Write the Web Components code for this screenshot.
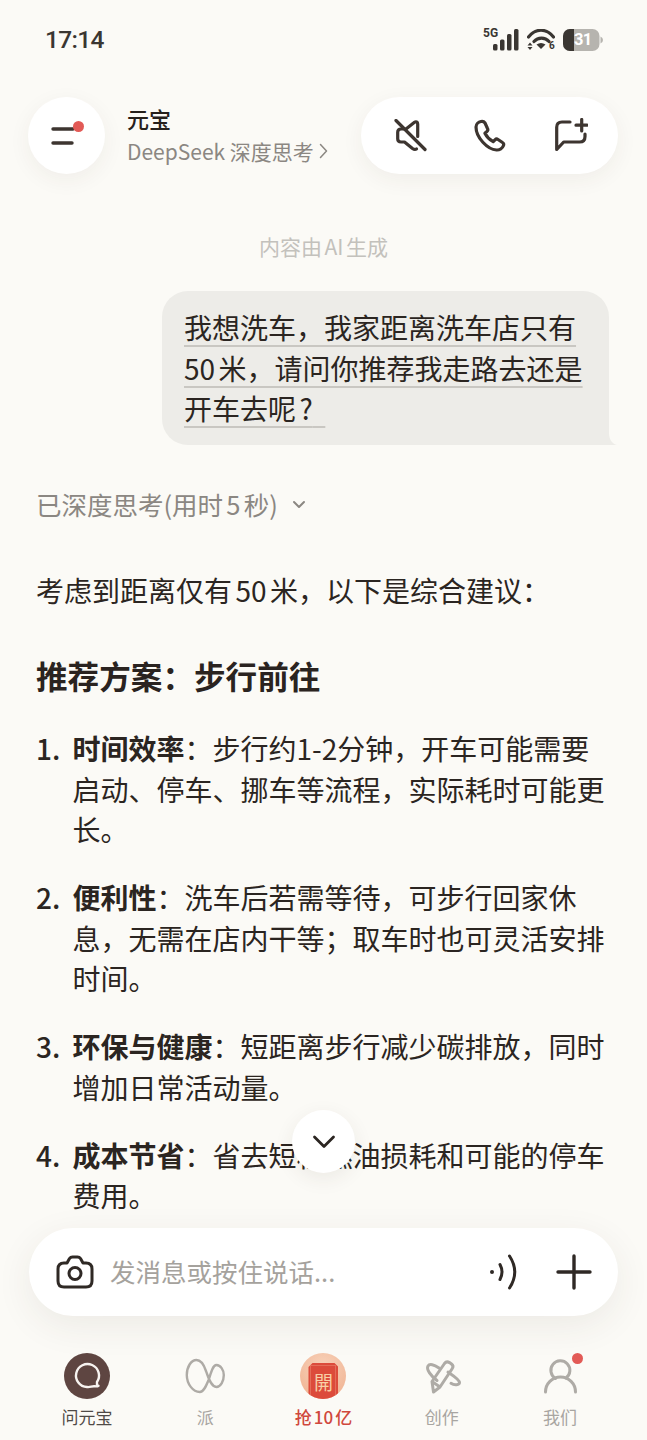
<!DOCTYPE html>
<html lang="zh">
<head>
<meta charset="utf-8">
<title>元宝</title>
<style>
  html, body { margin: 0; padding: 0; }
  body {
    background: #fbfaf6;
    color: #2b2521;
    font-family: "Noto Sans CJK SC", "Noto Sans", sans-serif;
    text-autospace: normal;
  }
</style>
</head>
<body>
<yb-app>
  <yb-status slot="top" time="17:14"></yb-status>
  <yb-header slot="top" name="元宝" sub="DeepSeek 深度思考"></yb-header>

  <yb-notice>内容由AI生成</yb-notice>
  <yb-bubble>我想洗车，我家距离洗车店只有50米，请问你推荐我走路去还是开车去呢?</yb-bubble>
  <yb-thought>已深度思考(用时5秒)</yb-thought>
  <yb-answer>
    <p>考虑到距离仅有50米，以下是综合建议：</p>
    <h3>推荐方案：步行前往</h3>
    <yb-step n="1."><b>时间效率</b>：步行约1-2分钟，开车可能需要启动、停车、挪车等流程，实际耗时可能更长。</yb-step>
    <yb-step n="2."><b>便利性</b>：洗车后若需等待，可步行回家休息，无需在店内干等；取车时也可灵活安排时间。</yb-step>
    <yb-step n="3."><b>环保与健康</b>：短距离步行减少碳排放，同时增加日常活动量。</yb-step>
    <yb-step n="4."><b>成本节省</b>：省去短程燃油损耗和可能的停车费用。</yb-step>
  </yb-answer>
  <yb-scroll-down slot="over"></yb-scroll-down>

  <yb-composer slot="bottom" placeholder="发消息或按住说话..."></yb-composer>
  <yb-tabbar slot="bottom">
    <yb-tab label="问元宝" tone="active">
      <svg width="46" height="46" viewBox="0 0 46 46">
        <circle cx="23" cy="23" r="23" fill="#5e4541"/>
        <path d="M33 32V29A11.500 11.500 0 1 0 23 34c3 .5 5-1 7.500-.7 1.400.2 3 .3 4-.5" fill="none" stroke="#f7f3f0" stroke-width="2.400" stroke-linecap="round"/>
      </svg>
    </yb-tab>
    <yb-tab label="派">
      <svg width="46" height="46" viewBox="0 0 46 46">
        <path d="M14.500 7C9 7 4.800 14 4.800 22 4.800 31 11 39 17.800 39 22 39 24.500 32 27 26 29 19 31 12 34.500 12 38.500 12 41.800 17 41.800 22 41.800 28.500 38.500 34 34.500 34 29 34 26 24 24 18 22 12 18.500 7 14.500 7Z" fill="none" stroke="#aeaba6" stroke-width="2.400"/>
      </svg>
    </yb-tab>
    <yb-tab label="抢10亿" tone="red">
      <yb-redpack></yb-redpack>
    </yb-tab>
    <yb-tab label="创作">
      <svg width="46" height="46" viewBox="0 0 46 46">
        <path d="M14.500 39L13 28.500 25.500 10.500q2-2.700 5-.9l2 1.400q2.500 2 .8 4.500L21 34Z M13 28.500l8 5.500" fill="none" stroke="#aeaba6" stroke-width="3" stroke-linejoin="round"/>
        <path d="M20 15C15 11.500 10.500 10.500 9 13 7 16.500 12 23 18 27.500M29 19c5 3.500 11.500 7.500 11.500 10.500 0 2.500-5 3.200-8.500 .8" fill="none" stroke="#aeaba6" stroke-width="3" stroke-linecap="round"/>
      </svg>
    </yb-tab>
    <yb-tab label="我们" dot>
      <svg width="46" height="46" viewBox="0 0 46 46">
        <path d="M8.500 39A15 15 0 0 1 38.500 39" fill="none" stroke="#aeaba6" stroke-width="3" stroke-linecap="round"/>
        <path d="M18.500 25.500A9.500 9.500 0 1 1 29 25" fill="none" stroke="#aeaba6" stroke-width="3" stroke-linecap="round"/>
      </svg>
    </yb-tab>
  </yb-tabbar>
</yb-app>

<script>
class YbApp extends HTMLElement {
  connectedCallback() {
    const shadowRoot = this.attachShadow({ mode: "open" });
    shadowRoot.innerHTML = `
      <style>
        :host { display: flex; flex-direction: column; height: 1440px; overflow: hidden; }
        .chat { flex: 1; min-height: 0; position: relative; overflow: hidden; }
        .scroll { height: 100%; overflow: hidden; }
      </style>
      <slot name="top"></slot>
      <div class="chat">
        <div class="scroll"><slot></slot></div>
        <slot name="over"></slot>
      </div>
      <slot name="bottom"></slot>
    `;
  }
}

class YbStatus extends HTMLElement {
  connectedCallback() {
    const shadowRoot = this.attachShadow({ mode: "open" });
    shadowRoot.innerHTML = `
      <style>
        :host { display: flex; height: 80px; padding: 0 44px 0 45px; align-items: center; justify-content: space-between; box-sizing: border-box; }
        .time { font: 500 24.500px/1 Roboto, sans-serif; color: #3a3632; letter-spacing: -.7px; }
        .icons { display: flex; align-items: center; }
        .five { font: 700 12px/1 Roboto, sans-serif; color: #3a3632; position: absolute; left: 0; top: -2px; }
        .signal { position: relative; width: 36px; height: 22px; margin-right: 8px; }
        .signal svg { position: absolute; left: 0; top: 0; }
        .wifi { position: relative; width: 28px; height: 22px; }
        .wifi svg { display: block; }
        .wifi span { position: absolute; left: 22px; bottom: 0; font: 700 10px/10px Roboto, sans-serif; color: #3a3632; }
        .batt { position: relative; width: 40px; height: 22px; margin-left: 8px; }
        .batt svg { position: absolute; left: 0; top: 0; }
        .batt span { position: absolute; left: 11px; top: 0; width: 17px; font: 700 16.500px/22px Roboto, sans-serif; color: #fff; text-align: center; letter-spacing: -.8px; }
      </style>
      <span class="time">${this.getAttribute("time")}</span>
      <div class="icons">
        <div class="signal">
          <span class="five">5G</span>
          <svg width="36" height="22" viewBox="0 0 36 22" fill="#3a3632">
            <rect x="10" y="15" width="4.500" height="6.500" rx="1.500"/>
            <rect x="17" y="10.500" width="4.500" height="11" rx="1.500"/>
            <rect x="24" y="5" width="4.500" height="16.500" rx="1.500"/>
            <rect x="31" y="0" width="4.500" height="21.500" rx="1.500"/>
          </svg>
        </div>
        <div class="wifi">
          <svg width="28" height="22" viewBox="0 0 28 22">
            <path d="M1.500 8C8.500 -1 19.500 -1 26.500 8M7 12.500C11 8 18 8 22 12.500" fill="none" stroke="#3a3632" stroke-width="3.200" stroke-linecap="round"/>
            <path d="M9.500 15.500Q14 12.500 18.500 15.500L14 20Z" fill="#3a3632"/>
            <path d="M.5 16.500L3 13.500 5.500 16.500ZM.5 18L3 21 5.500 18Z" fill="#3a3632"/>
          </svg>
          <span>6</span>
        </div>
        <div class="batt">
          <svg width="40" height="22" viewBox="0 0 40 22">
            <rect x="0" y="0" width="36.500" height="22" rx="7" fill="#b6b4af"/>
            <path d="M7 0H11V22H7a7 7 0 0 1-7-7V7a7 7 0 0 1 7-7Z" fill="#3a3632"/>
            <path d="M37.500 7.500q2.500 1 2.500 3.500t-2.500 3.500Z" fill="#b6b4af"/>
          </svg>
          <span>31</span>
        </div>
      </div>
    `;
  }
}

class YbHeader extends HTMLElement {
  connectedCallback() {
    const shadowRoot = this.attachShadow({ mode: "open" });
    shadowRoot.innerHTML = `
      <style>
        :host { display: flex; align-items: center; height: 77px; margin-top: 17px; padding: 0 29px 0 28px; }
        .menu, .actions { background: #fff; box-shadow: 0 6px 22px rgba(70, 55, 40, .06); }
        .menu { width: 77px; height: 77px; border-radius: 50%; flex: none; display: flex; align-items: center; justify-content: center; }
        .who { margin-left: 22px; flex: 1; }
        .name { font-size: 22px; line-height: 30px; font-weight: 500; color: #26201c; margin-top: -2px; }
        .sub { font-size: 21px; line-height: 30px; margin-top: 2.500px; color: #8b8782; display: flex; align-items: center; gap: 5px; white-space: nowrap; }
        .actions { width: 257px; height: 77px; border-radius: 39px; box-sizing: border-box; padding: 0 30px 0 32px; display: flex; align-items: center; justify-content: space-between; }
        svg { display: block; }
      </style>
      <div class="menu">
        <svg width="40" height="32" viewBox="0 0 40 32">
          <path d="M6 9H26" stroke="#3d3530" stroke-width="3.400" stroke-linecap="round"/>
          <path d="M6 23H25" stroke="#3d3530" stroke-width="3.400" stroke-linecap="round"/>
          <circle cx="31.500" cy="6.500" r="5.500" fill="#e25a56"/>
        </svg>
      </div>
      <div class="who">
        <div class="name">${this.getAttribute("name")}</div>
        <div class="sub">${this.getAttribute("sub")}
          <svg width="9" height="16" viewBox="0 0 9 16"><path d="M1.500 1.500L7.500 8 1.500 14.500" fill="none" stroke="#8b8782" stroke-width="1.500" stroke-linecap="round" stroke-linejoin="round"/></svg>
        </div>
      </div>
      <div class="actions">
        <svg width="34" height="34" viewBox="0 0 34 34" fill="none" stroke="#3d3530" stroke-width="3.200" stroke-linecap="round" stroke-linejoin="round">
          <path d="M24.700 17.500V5c0-2-1.700-2.800-3.200-1.700L13 10H8c-2 0-3.300 1.300-3.300 3.300v6.500c0 1.900 1.300 3.200 3.300 3.200h3.500l8 6.500c1.500 1.100 2.800 1.300 4 .5"/>
          <path d="M3 1.500L32 30.500"/>
        </svg>
        <svg width="36" height="36" viewBox="0 0 36 36" fill="none" stroke="#3d3530" stroke-width="3.200" stroke-linecap="round" stroke-linejoin="round">
          <path d="M9 3.500c-2.500.5-5 2.500-5 5.500 0 10.500 11.500 22.500 20.500 23 3 .2 6-1.800 7-4.500.5-1.400 0-2.400-1-3l-4.500-3c-1.200-.8-2.200-.5-3 .3l-1.800 1.900c-3.300-1.800-6.500-5-8.300-8.500l2-1.700c.9-.8 1.200-1.900.6-3L13 5c-.8-1.200-2.500-1.800-4-1.500z"/>
        </svg>
        <svg width="36" height="36" viewBox="0 0 36 36" fill="none" stroke="#3d3530" stroke-width="3.200" stroke-linecap="round" stroke-linejoin="round">
          <path d="M18 4H10q-5.300 0-5.300 5.300V31.500l7-7.500H27.500q5.500 0 5.500-5.500V16"/>
          <path d="M29.700 1.500V13M24 7.200H35"/>
        </svg>
      </div>
    `;
  }
}

class YbNotice extends HTMLElement {
  connectedCallback() {
    const shadowRoot = this.attachShadow({ mode: "open" });
    shadowRoot.innerHTML = `
      <style>
        :host { display: block; margin-top: 58px; text-align: center; font-size: 21px; line-height: 28px; color: #c3c1bc; }
      </style>
      <slot></slot>
    `;
  }
}

class YbBubble extends HTMLElement {
  connectedCallback() {
    const shadowRoot = this.attachShadow({ mode: "open" });
    shadowRoot.innerHTML = `
      <style>
        :host { display: block; position: relative; box-sizing: border-box; width: 447px; margin: 31px 38px 0 auto; padding: 16px 18px 16.500px 22px; background: #edecE8; border-radius: 26px 26px 0 26px; font-size: 28px; line-height: 40.500px; color: #2b2521; }
        .t { text-decoration: underline 1.500px #c9c7c2; text-underline-offset: 6px; text-decoration-skip-ink: none; }
        .t::after { content: "\\00a0\\00a0"; }
        .tail { position: absolute; right: -8px; bottom: 0; display: block; }
      </style>
      <span class="t"><slot></slot></span>
      <svg class="tail" width="8" height="12" viewBox="0 0 8 12"><path d="M0 0C0 6 3 11 8 12H0Z" fill="#edecE8"/></svg>
    `;
  }
}

class YbThought extends HTMLElement {
  connectedCallback() {
    const shadowRoot = this.attachShadow({ mode: "open" });
    shadowRoot.innerHTML = `
      <style>
        :host { display: flex; align-items: center; gap: 14px; margin: 41px 36px 0; font-size: 25.500px; line-height: 36px; color: #8b8782; }
      </style>
      <slot></slot>
      <svg width="14" height="9" viewBox="0 0 14 9"><path d="M2 2L7 7 12 2" fill="none" stroke="#8b8782" stroke-width="2" stroke-linecap="round" stroke-linejoin="round"/></svg>
    `;
  }
}

class YbAnswer extends HTMLElement {
  connectedCallback() {
    const shadowRoot = this.attachShadow({ mode: "open" });
    shadowRoot.innerHTML = `
      <style>
        :host { display: block; margin: 47.750px 37px 0 36px; font-size: 28px; line-height: 40.700px; color: #2b2521; }
        ::slotted(p) { margin: 0; }
        ::slotted(h3) { margin: 43px 0 30.500px; font-size: 31.600px; line-height: 44px; font-weight: 700; color: #2a2320; }
      </style>
      <slot></slot>
    `;
  }
}

class YbStep extends HTMLElement {
  connectedCallback() {
    const shadowRoot = this.attachShadow({ mode: "open" });
    shadowRoot.innerHTML = `
      <style>
        :host { display: grid; grid-template-columns: 36.500px 1fr; margin-bottom: 27px; text-autospace: no-autospace; }
        .n { font-weight: 500; }
        ::slotted(b) { font-weight: 700; }
      </style>
      <span class="n">${this.getAttribute("n")}</span>
      <div><slot></slot></div>
    `;
  }
}

class YbScrollDown extends HTMLElement {
  connectedCallback() {
    const shadowRoot = this.attachShadow({ mode: "open" });
    shadowRoot.innerHTML = `
      <style>
        :host { position: absolute; left: 292px; bottom: 55px; width: 63px; height: 63px; border-radius: 50%; background: #fff; box-shadow: 0 6px 20px rgba(70, 55, 40, .08); display: flex; align-items: center; justify-content: center; }
      </style>
      <svg width="24" height="14" viewBox="0 0 24 14"><path d="M2.500 2L12 11.500 21.500 2" fill="none" stroke="#2b2521" stroke-width="2.800" stroke-linecap="round" stroke-linejoin="round"/></svg>
    `;
  }
}

class YbComposer extends HTMLElement {
  connectedCallback() {
    const shadowRoot = this.attachShadow({ mode: "open" });
    shadowRoot.innerHTML = `
      <style>
        :host { display: flex; align-items: center; height: 88px; margin: 0 29px; padding: 0 26px 0 27px; box-sizing: border-box; background: #fff; border-radius: 44px; box-shadow: 0 10px 36px rgba(70, 55, 40, .08); }
        .ph { flex: 1; margin: 0 0 2px 16px; font-size: 25.500px; line-height: 34px; color: #a5a29d; text-autospace: no-autospace; }
        svg { display: block; flex: none; }
        .voice { margin-right: 37px; }
      </style>
      <svg width="38" height="36" viewBox="0 0 38 36" fill="none" stroke="#2f2925" stroke-width="3" stroke-linejoin="round">
        <path d="M2 15q0-6 6-6h3l2.500-4.500q1-1.500 3-1.500h5q2 0 3 1.500L27 9h3q6 0 6 6v12q0 6-6 6H8q-6 0-6-6Z"/>
        <circle cx="19" cy="19.500" r="6"/>
      </svg>
      <span class="ph">${this.getAttribute("placeholder")}</span>
      <svg class="voice" width="30" height="36" viewBox="0 0 30 36" fill="none" stroke="#2f2925" stroke-width="3" stroke-linecap="round">
        <circle cx="3" cy="18" r="2" fill="#2f2925" stroke="none"/>
        <path d="M11 10.500Q15 18 11 25.500"/>
        <path d="M20.500 2Q31 18 20.500 34"/>
      </svg>
      <svg width="36" height="36" viewBox="0 0 36 36" fill="none" stroke="#2f2925" stroke-width="3.400" stroke-linecap="round">
        <path d="M18 2V34M2 18H34"/>
      </svg>
    `;
  }
}

class YbTabbar extends HTMLElement {
  connectedCallback() {
    const shadowRoot = this.attachShadow({ mode: "open" });
    shadowRoot.innerHTML = `
      <style>
        :host { display: grid; grid-template-columns: repeat(5, 1fr); height: 124px; padding: 37px 28px 0; box-sizing: border-box; }
      </style>
      <slot></slot>
    `;
  }
}

class YbTab extends HTMLElement {
  connectedCallback() {
    const shadowRoot = this.attachShadow({ mode: "open" });
    const tone = this.getAttribute("tone");
    const color = tone === "active" ? "#4f4a46" : tone === "red" ? "#d0483c" : "#a8a5a1";
    shadowRoot.innerHTML = `
      <style>
        :host { display: flex; flex-direction: column; align-items: center; }
        .icon { position: relative; width: 46px; height: 46px; }
        .dot { position: absolute; left: 35px; top: 0; width: 11px; height: 11px; border-radius: 50%; background: #e25a56; }
        ::slotted(svg) { display: block; }
        .label { margin-top: 6px; font-size: 17px; line-height: 24px; color: ${color}; font-weight: ${tone === "red" ? 500 : 400}; }
      </style>
      <div class="icon"><slot></slot>${this.hasAttribute("dot") ? '<span class="dot"></span>' : ""}</div>
      <span class="label">${this.getAttribute("label")}</span>
    `;
  }
}

class YbRedpack extends HTMLElement {
  connectedCallback() {
    const shadowRoot = this.attachShadow({ mode: "open" });
    shadowRoot.innerHTML = `
      <style>
        :host { display: flex; justify-content: center; align-items: flex-start; width: 46px; height: 46px; border-radius: 50%; overflow: hidden; background: radial-gradient(circle at 50% 30%, #f8d3bb, #efae8c); }
        .env { position: relative; width: 30px; height: 44px; margin-top: 10px; background: #dc4b3b; clip-path: polygon(4px 0, 26px 0, 30px 4px, 30px 100%, 0 100%, 0 4px); display: flex; justify-content: center; padding-top: 7px; box-sizing: border-box; font: 400 19px/24px "Noto Sans CJK TC", sans-serif; color: #f8cfa6; }
        .env::before { content: ""; position: absolute; left: 2px; right: 2px; top: 2px; bottom: -4px; border: 1px solid rgba(250, 190, 160, .3); }
      </style>
      <div class="env">開</div>
    `;
  }
}

customElements.define("yb-app", YbApp);
customElements.define("yb-status", YbStatus);
customElements.define("yb-header", YbHeader);
customElements.define("yb-notice", YbNotice);
customElements.define("yb-bubble", YbBubble);
customElements.define("yb-thought", YbThought);
customElements.define("yb-answer", YbAnswer);
customElements.define("yb-step", YbStep);
customElements.define("yb-scroll-down", YbScrollDown);
customElements.define("yb-composer", YbComposer);
customElements.define("yb-tabbar", YbTabbar);
customElements.define("yb-tab", YbTab);
customElements.define("yb-redpack", YbRedpack);
</script>
</body>
</html>
